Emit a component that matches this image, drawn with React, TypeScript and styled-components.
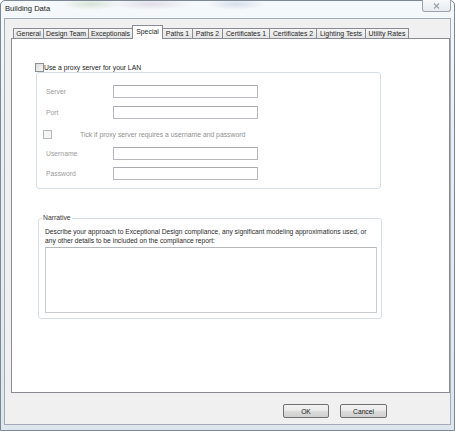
import styled, { createGlobalStyle } from "styled-components";

const Global = createGlobalStyle`
  html, body { margin: 0; padding: 0; background: #fff; }
  body { font-family: "Liberation Sans", Arial, sans-serif; }
  * { box-sizing: border-box; }
`;

const Window = styled.div`
  width: 455px;
  height: 431px;
  display: flex;
  flex-direction: column;
  padding: 0 3px 5px 3px;
  border: 1px solid #7b8792;
  border-radius: 5px 5px 0 0;
  background:
    radial-gradient(ellipse 30px 6px at 90px 3px, rgba(120, 160, 110, 0.25), transparent),
    radial-gradient(ellipse 40px 6px at 150px 3px, rgba(150, 120, 170, 0.22), transparent),
    radial-gradient(ellipse 30px 6px at 235px 3px, rgba(120, 150, 190, 0.25), transparent),
    linear-gradient(180deg, #f6f9fb 0%, #e9eff4 30%, #dde6ed 100%);
`;

const TitleBar = styled.div`
  height: 17px;
  display: flex;
  justify-content: space-between;
  align-items: flex-start;
`;

const Title = styled.span`
  font-size: 7.6px;
  line-height: 8px;
  margin: 4px 0 0 1px;
  color: #1a1a1a;
`;

const CloseButton = styled.div`
  width: 29px;
  height: 12px;
  margin-top: -1px;
  display: flex;
  align-items: center;
  justify-content: center;
  border: 1px solid #9aa3ac;
  border-top: none;
  border-radius: 0 0 3px 3px;
  background: linear-gradient(180deg, #f7f9fa 0%, #e8ecf0 100%);
`;

const Client = styled.div`
  flex: 1;
  display: flex;
  flex-direction: column;
  background: #f0f0f0;
  border: 1px solid #a3acb5;
`;

const TabStrip = styled.div`
  height: 14px;
  margin: 6px 0 -1px 8px;
  display: flex;
  align-items: flex-start;
  position: relative;
  z-index: 1;
`;

const Tab = styled.div<{ $w: number; $active?: boolean }>`
  width: ${(p) => p.$w}px;
  margin-right: -1px;
  display: flex;
  align-items: center;
  justify-content: center;
  font-size: 6.9px;
  color: #1e1e1e;
  white-space: nowrap;
  border: 1px solid #898c95;
  border-bottom: none;
  ${(p) =>
    p.$active
      ? `height: 14px; padding-bottom: 2px; background: #fff; position: relative; z-index: 2;`
      : `height: 10px; margin-top: 3px; background: linear-gradient(180deg, #f4f4f4 0%, #e4e4e4 100%);`}
`;

const Panel = styled.div`
  flex: 1;
  margin-left: 6px;
  background: #fff;
  border: 1px solid #898c95;
  padding: 23px 0 0 23px;
`;

const CheckRow = styled.label<{ $indent?: number }>`
  display: flex;
  align-items: center;
  height: 10px;
  padding-left: ${(p) => p.$indent ?? 0}px;
  font-size: 6.8px;
  color: #222;
`;

const Check = styled.span<{ $dim?: boolean }>`
  width: 9px;
  height: 9px;
  flex: none;
  border: 1px solid ${(p) => (p.$dim ? "#b8b8b8" : "#8e8f8f")};
  background: ${(p) =>
    p.$dim ? "#f4f4f4" : "linear-gradient(135deg, #dcdcdc 0%, #f6f6f6 100%)"};
`;

const CheckText = styled.span<{ $offset: number; $dim?: boolean }>`
  margin-left: ${(p) => p.$offset}px;
  color: ${(p) => (p.$dim ? "#8f8f8f" : "#222")};
`;

const ProxyGroup = styled.div`
  width: 345px;
  height: 117px;
  margin-left: 1px;
  border: 1px solid #d5dfe5;
  border-radius: 3px;
  padding-top: 11px;
`;

const Field = styled.div<{ $top: number }>`
  display: grid;
  grid-template-columns: 67px 145px;
  align-items: center;
  margin-top: ${(p) => p.$top}px;
  padding-left: 9px;
  height: 13px;
`;

const FieldLabel = styled.span`
  font-size: 6.8px;
  color: #9a9a9a;
`;

const TextBox = styled.div`
  height: 13px;
  border: 1px solid #b5b8bd;
  border-top-color: #a6a9ae;
  border-radius: 1px;
  background: #fff;
`;

const TickRow = styled.div`
  margin-top: 10px;
  height: 10px;
`;

const Narrative = styled.fieldset`
  width: 343px;
  margin: 25px 0 0 3px;
  padding: 4px 4px 5px 6px;
  border: 1px solid #d5dfe5;
  border-radius: 3px;
`;

const Caption = styled.legend`
  font-size: 6.8px;
  line-height: 8px;
  padding: 0 1px;
  margin-left: -3px;
  color: #333;
`;

const Describe = styled.p`
  margin: 0;
  padding-top: 1px;
  font-size: 6.7px;
  line-height: 9px;
  color: #2a2a2a;
`;

const NarrativeBox = styled.div`
  width: 332px;
  height: 66px;
  margin-top: 2px;
  border: 1px solid #c9cccf;
  border-top-color: #b5b8bc;
  background: #fff;
`;

const ButtonRow = styled.div`
  height: 31px;
  display: flex;
  justify-content: flex-end;
  gap: 11px;
  padding: 11px 63px 0 0;
`;

const Button = styled.button<{ $w: number }>`
  width: ${(p) => p.$w}px;
  height: 14px;
  padding: 0;
  font-family: inherit;
  font-size: 6.7px;
  color: #1a1a1a;
  border: 1px solid #707070;
  border-radius: 2px;
  background: linear-gradient(180deg, #f3f3f3 0%, #ebebeb 45%, #dddddd 50%, #cfcfcf 100%);
`;

const tabs: [string, number][] = [
  ["General", 31],
  ["Design Team", 46],
  ["Exceptionals", 45],
  ["Special", 31],
  ["Paths 1", 31],
  ["Paths 2", 31],
  ["Certificates 1", 48],
  ["Certificates 2", 48],
  ["Lighting Tests", 50],
  ["Utility Rates", 44],
];

export default function App() {
  return (
    <>
      <Global />
      <Window>
        <TitleBar>
          <Title>Building Data</Title>
          <CloseButton>
            <svg width="7" height="6" viewBox="0 0 7 6">
              <path d="M1 0.5 L6 5.5 M6 0.5 L1 5.5" stroke="#9ba3ab" strokeWidth="1.2" fill="none" />
            </svg>
          </CloseButton>
        </TitleBar>
        <Client>
          <TabStrip>
            {tabs.map(([name, w]) => (
              <Tab key={name} $w={w} $active={name === "Special"}>
                {name}
              </Tab>
            ))}
          </TabStrip>
          <Panel>
            <CheckRow>
              <Check />
              <CheckText $offset={0}>Use a proxy server for your LAN</CheckText>
            </CheckRow>
            <ProxyGroup>
              <Field $top={1}>
                <FieldLabel>Server</FieldLabel>
                <TextBox />
              </Field>
              <Field $top={8}>
                <FieldLabel>Port</FieldLabel>
                <TextBox />
              </Field>
              <TickRow>
                <CheckRow $indent={6}>
                  <Check $dim />
                  <CheckText $offset={28} $dim>
                    Tick if proxy server requires a username and password
                  </CheckText>
                </CheckRow>
              </TickRow>
              <Field $top={8}>
                <FieldLabel>Username</FieldLabel>
                <TextBox />
              </Field>
              <Field $top={7}>
                <FieldLabel>Password</FieldLabel>
                <TextBox />
              </Field>
            </ProxyGroup>
            <Narrative>
              <Caption>Narrative</Caption>
              <Describe>
                Describe your approach to Exceptional Design compliance, any significant modeling approximations used, or
                <br />
                any other details to be included on the compliance report:
              </Describe>
              <NarrativeBox />
            </Narrative>
          </Panel>
          <ButtonRow>
            <Button $w={46}>OK</Button>
            <Button $w={47}>Cancel</Button>
          </ButtonRow>
        </Client>
      </Window>
    </>
  );
}
